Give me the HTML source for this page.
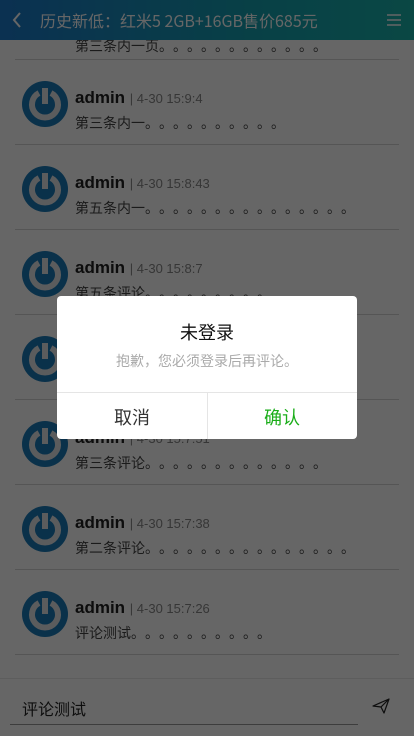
<!DOCTYPE html>
<html><head><meta charset="utf-8"><style>
*{margin:0;padding:0;box-sizing:border-box}
html,body{width:414px;height:736px;overflow:hidden;background:#fff}
body{font-family:"Liberation Sans","Noto Sans CJK SC",sans-serif;position:relative}
.hdr{position:absolute;top:0;left:0;width:414px;height:40px;background:linear-gradient(90deg,#1c7acb,#15a0b0 60%,#19b3ab);z-index:1}
.hdr .t{position:absolute;left:40px;top:10px;font-size:16px;color:#fff;font-family:"Noto Sans CJK SC",sans-serif;line-height:20px}
.item{position:absolute;left:0;width:414px;height:85px}
.item .sep{position:absolute;left:15px;right:15px;bottom:0;height:1px;background:#d4d4d4}
.av{position:absolute;left:22px;top:21px}
.nm{position:absolute;left:75px;top:28px;font-size:17px;font-weight:bold;color:#222;line-height:20px}
.nm span{font-weight:normal;font-size:13px;color:#888}
.tx{position:absolute;left:75px;top:54px;font-size:14px;color:#444;font-family:"Noto Sans CJK SC",sans-serif;line-height:18px;white-space:nowrap}
.tx i{font-style:normal;letter-spacing:7px}
.foot{position:absolute;top:678px;left:0;width:414px;height:58px;border-top:1px solid #e8e8e8;background:#fff}
.ov{position:absolute;left:0;top:0;width:414px;height:736px;background:rgba(0,0,0,0.6);z-index:3}
.dlg{position:absolute;left:57px;top:296px;width:300px;height:143px;background:#fff;border-radius:4px;z-index:4;font-family:"Noto Sans CJK SC",sans-serif}
</style></head><body>
<div class="hdr">
<svg style="position:absolute;left:12px;top:12px" width="10" height="16"><path d="M8 1L2 8l6 7" stroke="#fff" stroke-width="2" fill="none"/></svg>
<div class="t">历史新低：红米5 2GB+16GB售价685元</div>
<svg style="position:absolute;left:386px;top:14px" width="16" height="12"><path d="M1 1h14M1 6h14M1 11h14" stroke="#fff" stroke-width="1.6"/></svg>
</div>

<div class="item" style="top:-25px"><div class="tx" style="top:62px">第三条内一页<i>。。。。。。。。。。。。</i></div><div class="sep"></div></div>

<div class="item" style="top:60px"><svg class="av" width="46" height="46"><circle cx="23" cy="23" r="23" fill="#1b7ab8"/><path d="M17 12A13 13 0 1 0 29 12" stroke="#e3e6e8" stroke-width="6" fill="none"/><path d="M23 7v16" stroke="#e3e6e8" stroke-width="6"/></svg><div class="nm">admin <span>| 4-30 15:9:4</span></div><div class="tx">第三条内一<i>。。。。。。。。。。</i></div><div class="sep"></div></div>

<div class="item" style="top:145px"><svg class="av" width="46" height="46"><circle cx="23" cy="23" r="23" fill="#1b7ab8"/><path d="M17 12A13 13 0 1 0 29 12" stroke="#e3e6e8" stroke-width="6" fill="none"/><path d="M23 7v16" stroke="#e3e6e8" stroke-width="6"/></svg><div class="nm">admin <span>| 4-30 15:8:43</span></div><div class="tx">第五条内一<i>。。。。。。。。。。。。。。。</i></div><div class="sep"></div></div>

<div class="item" style="top:230px"><svg class="av" width="46" height="46"><circle cx="23" cy="23" r="23" fill="#1b7ab8"/><path d="M17 12A13 13 0 1 0 29 12" stroke="#e3e6e8" stroke-width="6" fill="none"/><path d="M23 7v16" stroke="#e3e6e8" stroke-width="6"/></svg><div class="nm">admin <span>| 4-30 15:8:7</span></div><div class="tx">第五条评论<i>。。。。。。。。。</i></div><div class="sep"></div></div>

<div class="item" style="top:315px"><svg class="av" width="46" height="46"><circle cx="23" cy="23" r="23" fill="#1b7ab8"/><path d="M17 12A13 13 0 1 0 29 12" stroke="#e3e6e8" stroke-width="6" fill="none"/><path d="M23 7v16" stroke="#e3e6e8" stroke-width="6"/></svg><div class="nm">admin <span>| 4-30 15:8:0</span></div><div class="tx">第四条评论<i>。。。。。。。。。</i></div><div class="sep"></div></div>

<div class="item" style="top:400px"><svg class="av" width="46" height="46"><circle cx="23" cy="23" r="23" fill="#1b7ab8"/><path d="M17 12A13 13 0 1 0 29 12" stroke="#e3e6e8" stroke-width="6" fill="none"/><path d="M23 7v16" stroke="#e3e6e8" stroke-width="6"/></svg><div class="nm">admin <span>| 4-30 15:7:51</span></div><div class="tx">第三条评论<i>。。。。。。。。。。。。。</i></div><div class="sep"></div></div>

<div class="item" style="top:485px"><svg class="av" width="46" height="46"><circle cx="23" cy="23" r="23" fill="#1b7ab8"/><path d="M17 12A13 13 0 1 0 29 12" stroke="#e3e6e8" stroke-width="6" fill="none"/><path d="M23 7v16" stroke="#e3e6e8" stroke-width="6"/></svg><div class="nm">admin <span>| 4-30 15:7:38</span></div><div class="tx">第二条评论<i>。。。。。。。。。。。。。。。</i></div><div class="sep"></div></div>

<div class="item" style="top:570px"><svg class="av" width="46" height="46"><circle cx="23" cy="23" r="23" fill="#1b7ab8"/><path d="M17 12A13 13 0 1 0 29 12" stroke="#e3e6e8" stroke-width="6" fill="none"/><path d="M23 7v16" stroke="#e3e6e8" stroke-width="6"/></svg><div class="nm">admin <span>| 4-30 15:7:26</span></div><div class="tx">评论测试<i>。。。。。。。。。。</i></div><div class="sep"></div></div>

<div class="foot">
<div style="position:absolute;left:22px;top:17px;font-size:16px;color:#222;font-family:'Noto Sans CJK SC',sans-serif">评论测试</div>
<div style="position:absolute;left:10px;top:45px;width:348px;height:1px;background:#999"></div>
<svg style="position:absolute;left:372px;top:19px" width="18" height="16"><path d="M1 8L17 1L12 15L9 9ZM9 9L17 1" stroke="#222" stroke-width="1.2" fill="none" stroke-linejoin="round"/></svg>
</div>

<div class="ov"></div>
<div class="dlg">
<div style="position:absolute;top:23px;width:100%;text-align:center;font-size:18px;color:#111">未登录</div>
<div style="position:absolute;top:55px;width:100%;text-align:center;font-size:14px;color:#aaa">抱歉，您必须登录后再评论。</div>
<div style="position:absolute;top:96px;left:0;width:100%;height:1px;background:#e5e5e5"></div>
<div style="position:absolute;top:96px;left:150px;width:1px;height:47px;background:#e5e5e5"></div>
<div style="position:absolute;top:108px;left:0;width:150px;text-align:center;font-size:18px;color:#333">取消</div>
<div style="position:absolute;top:108px;left:150px;width:150px;text-align:center;font-size:18px;color:#1aad19">确认</div>
</div>
</body></html>
